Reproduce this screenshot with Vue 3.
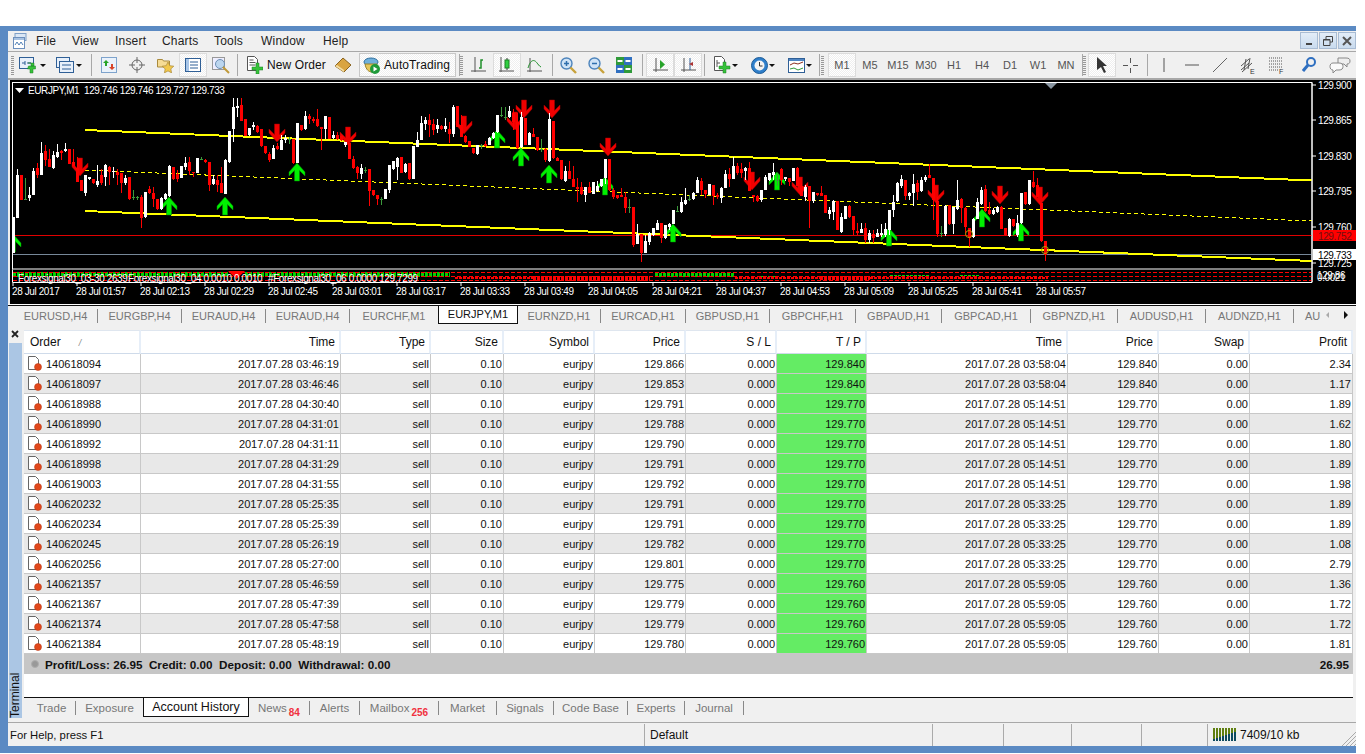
<template>
  <div class="window">
    <!-- menu -->
    <div class="menu-bar">
      <svg class="app-icon" width="15" height="17" viewBox="0 0 15 17">
        <rect x="2" y="0.5" width="11" height="7" fill="#dbe7f5" stroke="#7f9fc6" />
        <rect x="0.5" y="4.5" width="11" height="11" fill="#fff" stroke="#6d90bd" />
        <path d="M2 12l2-3 2 3 2-3 2 3" fill="none" stroke="#4f7fb5" />
        <rect x="1" y="5" width="10" height="2" fill="#a9c3e2" />
      </svg>
      <span v-for="m in menus" :key="m.name" class="menu-item" :class="m.cls">{{ m.name }}</span>
      <div class="win-buttons">
        <button class="win-btn"><span class="min-glyph"></span></button>
        <button class="win-btn">
          <svg width="10" height="10" viewBox="0 0 10 10"><path d="M3 3V.5h6.500V6H7M.5 3.500H7V9.500H.5z" fill="none" stroke="#444" /><path d="M.5 4H7" stroke="#444" /></svg>
        </button>
        <button class="win-btn">
          <svg width="10" height="10" viewBox="0 0 10 10"><path d="M1 1l8 8M9 1l-8 8" stroke="#555" stroke-width="2" /></svg>
        </button>
      </div>
    </div>

    <!-- toolbar -->
    <div class="toolbar">
      <span class="grip"></span>
      <div class="tb w37">
        <svg width="18" height="17" viewBox="0 0 18 17">
          <rect x=".5" y=".5" width="14" height="11" fill="#e8f0fa" stroke="#2f5f96" />
          <path d="M3 6h3M6 4v4M8 6h4" stroke="#2f5f96" />
          <path d="M9 6h3V9h3V6h-3zM9.500 9h7v3h-2.500v4h-3v-4h-2.500z" fill="#36c23a" stroke="#1c7f24" stroke-width=".5" />
        </svg>
        <span class="caret"></span>
      </div>
      <div class="tb w36">
        <svg width="18" height="17" viewBox="0 0 18 17">
          <rect x=".5" y=".5" width="13" height="10" fill="#e8f0fa" stroke="#2f5f96" />
          <rect x="3.500" y="4.500" width="14" height="11" fill="#e8f0fa" stroke="#2f5f96" />
          <path d="M6 8h9M6 12h9" stroke="#2f5f96" />
        </svg>
        <span class="caret"></span>
      </div>
      <span class="sep w8"></span>
      <div class="tb">
        <svg width="16" height="16" viewBox="0 0 16 16">
          <rect x=".5" y=".5" width="15" height="15" fill="#eaf2fb" stroke="#7ea3cc" />
          <path d="M5 3l3 3H6v3H4V6H2z" fill="#27a327" /><path d="M11 13l3-3h-2V7h-2v3H8z" fill="#d8452a" />
        </svg>
      </div>
      <div class="tb">
        <svg width="16" height="16" viewBox="0 0 16 16" fill="none" stroke="#666">
          <circle cx="8" cy="8" r="5" /><path d="M8 0v6M8 10v6M0 8h6M10 8h6" />
        </svg>
      </div>
      <div class="tb">
        <svg width="17" height="16" viewBox="0 0 17 16">
          <path d="M.5 2.500h5l1 1.500h6v6H.5z" fill="#f6dc95" stroke="#a98a3c" />
          <path d="M11 5l1.800 3.700 4 .5-3 2.700.8 4-3.600-2-3.600 2 .8-4-3-2.700 4-.5z" fill="#f2c84b" stroke="#a98a3c" stroke-width=".7" />
        </svg>
      </div>
      <div class="tb pressed">
        <svg width="16" height="14" viewBox="0 0 16 14">
          <rect x=".5" y=".5" width="15" height="13" fill="#fff" stroke="#2f5f96" />
          <rect x="1" y="1" width="3" height="12" fill="#a9c6e8" />
          <path d="M5 4h8M5 7h8M5 10h8" stroke="#2f5f96" />
        </svg>
      </div>
      <div class="tb">
        <svg width="18" height="18" viewBox="0 0 18 18">
          <rect x=".5" y="1.500" width="12" height="12" fill="#eef" stroke="#999" />
          <circle cx="8" cy="8" r="4.500" fill="#bcd6ef" stroke="#6d8fb5" />
          <path d="M11 11l6 6" stroke="#c09a3a" stroke-width="2" />
        </svg>
      </div>
      <span class="sep w4"></span>
      <div class="tb new-order">
        <svg width="16" height="18" viewBox="0 0 16 18">
          <path d="M.5.500h7l3 3v11H.5z" fill="#fff" stroke="#555" />
          <path d="M2.500 4h4M2.500 6.500h6M2.500 9h6" stroke="#555" />
          <path d="M9 7h3v4h4v3h-4v4H9v-4H5v-3h4z" fill="#36c23a" stroke="#1c7f24" stroke-width=".5" />
        </svg>
        <span>New Order</span>
      </div>
      <div class="tb">
        <svg width="18" height="16" viewBox="0 0 18 16">
          <path d="M1 9l8-8 8 7-7 7z" fill="#d9a441" stroke="#8a6420" />
          <path d="M1 9l9 6v-2L3 8z" fill="#f4dda0" />
        </svg>
      </div>
      <div class="auto-trading">
        <svg width="17" height="17" viewBox="0 0 17 17">
          <ellipse cx="8" cy="5" rx="7" ry="4" fill="#6fb0dc" stroke="#2f6f9e" />
          <path d="M2 7c1 6 4 8 7 8s5-3 5-8z" fill="#e6c65a" stroke="#9a8128" />
          <circle cx="12" cy="12" r="5" fill="#1f9a3a" />
          <path d="M10.500 9.500l4 2.500-4 2.500z" fill="#fff" />
        </svg>
        <span>AutoTrading</span>
      </div>
      <span class="sep w3"></span>
      <span class="grip g2"></span>
      <div class="tb">
        <svg width="16" height="16" viewBox="0 0 16 16" fill="none">
          <path d="M4 0v15M0 14h15" stroke="#555" /><path d="M8 11h2V3h2" stroke="#1f8f2a" stroke-width="1.500" />
        </svg>
      </div>
      <div class="tb pressed">
        <svg width="16" height="16" viewBox="0 0 16 16" fill="none">
          <path d="M2 0v15M0 14h15" stroke="#555" /><path d="M8 1v12" stroke="#333" /><rect x="6" y="3" width="4" height="8" fill="#30d040" stroke="#1c7f24" />
        </svg>
      </div>
      <div class="tb">
        <svg width="16" height="16" viewBox="0 0 16 16" fill="none">
          <path d="M3 1v14M0 14h15" stroke="#555" /><path d="M1 11c3-10 7-8 9-5 1 1 2 3 4 4" stroke="#1f8f2a" />
        </svg>
      </div>
      <span class="sep w5"></span>
      <div class="tb">
        <svg width="17" height="17" viewBox="0 0 17 17" fill="none">
          <circle cx="6.500" cy="6.500" r="5.500" fill="#cfe3f6" stroke="#4d84bc" stroke-width="1.400" />
          <path d="M4 6.500h5M6.500 4v5" stroke="#2f6fad" stroke-width="1.500" /><path d="M10.500 10.500l5.500 5.500" stroke="#c8a23c" stroke-width="2.400" />
        </svg>
      </div>
      <div class="tb">
        <svg width="17" height="17" viewBox="0 0 17 17" fill="none">
          <circle cx="6.500" cy="6.500" r="5.500" fill="#cfe3f6" stroke="#4d84bc" stroke-width="1.400" />
          <path d="M4 6.500h5" stroke="#2f6fad" stroke-width="1.500" /><path d="M10.500 10.500l5.500 5.500" stroke="#c8a23c" stroke-width="2.400" />
        </svg>
      </div>
      <div class="tb">
        <svg width="16" height="16" viewBox="0 0 16 16">
          <rect width="8" height="8" fill="#2f9a3a" /><rect x="8" width="8" height="8" fill="#2f6fc0" />
          <rect y="8" width="8" height="8" fill="#2f6fc0" /><rect x="8" y="8" width="8" height="8" fill="#2f9a3a" />
          <path d="M1.500 4h5M9.500 4h5M1.500 12h5M9.500 12h5" stroke="#fff" stroke-width="2" />
        </svg>
      </div>
      <span class="sep w8"></span>
      <div class="tb pressed">
        <svg width="15" height="16" viewBox="0 0 15 16" fill="none">
          <path d="M3 1v14M0 13h15" stroke="#555" /><path d="M7 3l5 4.500-5 4.500z" fill="#27a32a" />
        </svg>
      </div>
      <div class="tb pressed">
        <svg width="15" height="16" viewBox="0 0 15 16" fill="none">
          <path d="M3 1v14M0 13h15" stroke="#555" /><path d="M9 1v12" stroke="#2f5f96" /><path d="M8 7l4-2v4z" fill="#a33" />
        </svg>
      </div>
      <span class="sep w4"></span>
      <div class="tb w37 pl7">
        <svg width="17" height="18" viewBox="0 0 17 18">
          <path d="M.5.500h7l3 3v11H.5z" fill="#fff" stroke="#555" /><path d="M3 4v7M3 7h3" stroke="#555" />
          <path d="M9 6h3v4h4v3h-4v4H9v-4H5v-3h4z" fill="#36c23a" stroke="#1c7f24" stroke-width=".5" />
        </svg>
        <span class="caret"></span>
      </div>
      <div class="tb w37 pl7">
        <svg width="17" height="17" viewBox="0 0 17 17">
          <circle cx="8.500" cy="8.500" r="8" fill="#2f7fcb" stroke="#1d5b96" /><circle cx="8.500" cy="8.500" r="5" fill="#f4f4f4" />
          <path d="M8.500 5v4h3" fill="none" stroke="#333" />
        </svg>
        <span class="caret"></span>
      </div>
      <div class="tb w37 pl7">
        <svg width="17" height="15" viewBox="0 0 17 15">
          <rect x=".5" y=".5" width="16" height="14" fill="#fff" stroke="#2f5f96" /><rect x="1" y="1" width="15" height="2" fill="#4f85c3" />
          <path d="M2 7l4-2 4 1 5-2" fill="none" stroke="#8a3020" /><path d="M2 11l4-1 4 2 5-2" fill="none" stroke="#2f9a3a" />
        </svg>
        <span class="caret"></span>
      </div>
      <span class="sep w4"></span>
      <span class="grip g3"></span>
      <span v-for="p in periods" :key="p" class="tb period" :class="{ pressed: p === 'M1' }">{{ p }}</span>
      <span class="sep w3"></span>
      <span class="grip g4"></span>
      <div class="tb pressed">
        <svg width="12" height="16" viewBox="0 0 12 16"><path d="M1 0l10 9H7l3 6-2 1-3-6-4 3z" fill="#333" /></svg>
      </div>
      <div class="tb">
        <svg width="15" height="15" viewBox="0 0 15 15"><path d="M7.500 0v5M7.500 10v5M0 7.500h5M10 7.500h5" stroke="#555" fill="none" /></svg>
      </div>
      <span class="sep w6"></span>
      <div class="tb"><svg width="2" height="14"><path d="M1 0v14" stroke="#555" /></svg></div>
      <div class="tb"><svg width="14" height="2"><path d="M0 1h14" stroke="#555" /></svg></div>
      <div class="tb"><svg width="14" height="14"><path d="M0 14L14 0" stroke="#666" /></svg></div>
      <div class="tb">
        <svg width="15" height="17" viewBox="0 0 15 17" fill="none" stroke="#555">
          <path d="M0 9l8-7M0 13l8-7M1 15L11 6M3 13l2-11M7 12L9 1" /><text x="9" y="16.500" class="ico-letter">E</text>
        </svg>
      </div>
      <div class="tb">
        <svg width="15" height="17" viewBox="0 0 15 17" fill="none" stroke="#555" stroke-dasharray="1 1">
          <path d="M0 1h14M0 4h14M0 7h14M0 10h14M0 13h9" /><text x="10" y="16.500" class="ico-letter">F</text>
        </svg>
      </div>
      <span class="sep w5 blank"></span>
      <div class="tb">
        <svg width="14" height="16" viewBox="0 0 14 16" fill="none">
          <circle cx="9" cy="5" r="4" stroke="#2f6fc0" stroke-width="2" /><path d="M6 8l-5 6" stroke="#2f6fc0" stroke-width="3" />
        </svg>
      </div>
      <div class="tb chat">
        <svg width="22" height="16" viewBox="0 0 22 16">
          <path d="M9 1h8c3 0 4 1 4 3s-1 3-3 3v3l-3-3H9z" fill="#eee" stroke="#888" />
          <path d="M4 6h6c3 0 4 1.500 4 3.500S13 13 10 13H7l-3 3v-3c-2 0-3-1.500-3-3.500S2 6 4 6z" fill="#fafafa" stroke="#888" />
        </svg>
      </div>
    </div>

    <!-- chart, its data is read off the reference in 3x crop coordinates -->
    <svg class="chart" width="1348" height="225" viewBox="8 80 1348 225">
      <defs><clipPath id="plot"><rect x="13" y="83" width="1299" height="186" /></clipPath></defs>
      <rect x="8" y="80" width="1348" height="225" fill="#eee" />
      <rect x="10" y="80" width="1346" height="224" fill="#000" />
      <rect x="8" y="304" width="1348" height="1" fill="#fff" />
      <rect x="12.500" y="82.500" width="1299.500" height="186.500" fill="none" stroke="#fff" />
      <path d="M12.500 269.500V282.500H1312V269.500" fill="none" stroke="#fff" />

      <g clip-path="url(#plot)" shape-rendering="crispEdges">
        <line x1="13" y1="235.500" x2="1312" y2="235.500" stroke="#e00000" />
        <line x1="13" y1="254.500" x2="1312" y2="254.500" stroke="#778899" />
        <line x1="85" y1="130" x2="1312" y2="180.500" stroke="#ff0" stroke-width="2" />
        <line x1="85" y1="211" x2="1312" y2="261" stroke="#ff0" stroke-width="2" />
        <line x1="85" y1="170" x2="1312" y2="221" stroke="#ff0" stroke-dasharray="4 3" />
      </g>
      <g clip-path="url(#plot)">
        <polygon v-for="(a, i) in upArrows" :key="'u' + i" :points="a" fill="#00f000" stroke="#008a00" stroke-width=".5" />
        <polygon v-for="(a, i) in downArrows" :key="'d' + i" :points="a" fill="#f00000" stroke="#a00000" stroke-width=".5" />
      </g>
      <g shape-rendering="crispEdges">
        <g v-for="c in candles" :key="c.x">
          <rect :x="c.x" :y="c.wt" width="1" :height="c.wh" :fill="c.fill" />
          <rect :x="c.x - 1" :y="c.bt" width="3" :height="c.bh" :fill="c.fill" />
        </g>
      </g>
      <circle cx="969" cy="234" r="3.500" fill="none" stroke="#b5a000" />
      <circle cx="1045" cy="250" r="3.500" fill="none" stroke="#b5a000" />

      <!-- sub window -->
      <g shape-rendering="crispEdges">
        <line v-for="s in subBars" :key="s[0] + s[4]" :x1="s[0]" :y1="s[2]" :x2="s[1]" :y2="s[2]" :stroke="s[4]" :stroke-width="s[3]" stroke-dasharray="3 1" />
        <line v-for="y in [272.500, 276.500, 280.500]" :key="y" x1="13" :y1="y" x2="1312" :y2="y" stroke="#f00" stroke-dasharray="4 2" />
      </g>
      <polygon points="228,271 245,271 236.500,279" fill="#f00" />
      <text x="18" y="282" class="ct">Forexsignal30_03-30 2639</text>
      <text x="128" y="282" class="ct">Forexsignal30_04 0.0010 0.0010</text>
      <text x="268" y="282" class="ct">#Forexsignal30_06 0.0000 129.7299</text>

      <polygon points="15,88 24,88 19.500,93" fill="#fff" />
      <text x="28" y="94" class="ct">EURJPY,M1&#160;&#160;129.746 129.746 129.727 129.733</text>
      <polygon points="1045,83 1057,83 1051,89" fill="#8a96a2" />

      <!-- price axis -->
      <path d="M1312 83v199" stroke="#fff" fill="none" />
      <template v-for="p in prices" :key="p.t">
        <line x1="1312" :y1="p.y" x2="1316" :y2="p.y" stroke="#fff" />
        <text x="1318" :y="p.y + 4" class="ct">{{ p.t }}</text>
      </template>
      <rect x="1313" y="230" width="43" height="11" fill="#f00" />
      <text x="1318" y="240" class="ct dark">129.752</text>
      <rect x="1313" y="249" width="43" height="11" fill="#fff" />
      <text x="1318" y="259" class="ct black">129.733</text>
      <text x="1317" y="279" class="ct">129.86</text>
      <text x="1317" y="281" class="ct">0.0021</text>

      <!-- time axis -->
      <template v-for="t in times" :key="t.label">
        <line :x1="t.x" y1="283" :x2="t.x" y2="286" stroke="#fff" />
        <text :x="t.x - 1" y="295" class="ct">{{ t.label }}</text>
      </template>
    </svg>

    <!-- chart tabs -->
    <div class="chart-tabs">
      <span v-for="(t, i) in chartTabs" :key="i" class="ctab" :class="{ on: t === 'EURJPY,M1' }">{{ t }}</span>
      <span class="ctab clipped">AU</span>
      <span class="arrows">
        <i class="arrow-left"></i>
        <i class="arrow-right"></i>
      </span>
    </div>

    <!-- terminal -->
    <div class="terminal">
      <div class="side">
        <svg class="close-x" width="8" height="8" viewBox="0 0 8 8"><path d="M1 1l6 6M7 1L1 7" stroke="#222" stroke-width="1.800" /></svg>
        <div class="side-strip"><span>Terminal</span></div>
      </div>
      <div class="term-main">
        <table class="orders">
          <colgroup>
            <col v-for="i in 12" :key="i" :class="'c' + (i - 1)">
          </colgroup>
          <thead>
            <tr>
              <th class="left">Order<span class="sort">/</span></th>
              <th v-for="h in heads" :key="h.k">{{ h.t }}</th>
            </tr>
          </thead>
          <tbody>
            <tr v-for="r in rows" :key="r[0]">
              <td class="left">
                <span class="order-cell">
                  <svg width="15" height="15" viewBox="0 0 15 15">
                    <path d="M1.500.500h7l3 3v10h-10z" fill="#fff" stroke="#666" />
                    <circle cx="11" cy="11" r="3.500" fill="#e0481c" stroke="#b8320c" stroke-width=".5" />
                  </svg>
                  {{ r[0] }}
                </span>
              </td>
              <td>{{ r[1] }}</td>
              <td>sell</td>
              <td>0.10</td>
              <td>eurjpy</td>
              <td>{{ r[2] }}</td>
              <td>0.000</td>
              <td class="tp">{{ r[3] }}</td>
              <td>{{ r[4] }}</td>
              <td>{{ r[3] }}</td>
              <td>0.00</td>
              <td>{{ r[5] }}</td>
            </tr>
          </tbody>
        </table>
        <div class="total">
          <i class="dot"></i>
          <span class="total-text">Profit/Loss: 26.95&#160;&#160;Credit: 0.00&#160;&#160;Deposit: 0.00&#160;&#160;Withdrawal: 0.00</span>
          <span class="total-sum">26.95</span>
        </div>
        <div class="blank-area"></div>
        <div class="term-tabs">
          <span v-for="t in termTabs" :key="t.name" class="ttab" :class="{ on: t.name === 'Account History' }">{{ t.name }}<sub v-if="t.n">{{ t.n }}</sub></span>
        </div>
      </div>
    </div>

    <!-- status bar -->
    <div class="status">
      <span class="st st-help">For Help, press F1</span>
      <span class="st st-profile">Default</span>
      <span class="st st-a"></span>
      <span class="st st-b"></span>
      <span class="st st-c"></span>
      <span class="st st-d"></span>
      <span class="st st-conn">
        <svg width="23" height="13" viewBox="0 0 23 13" shape-rendering="crispEdges">
          <g v-for="i in 8" :key="i">
            <rect :x="(i - 1) * 3" y="0" width="2" height="13" fill="#5f7f10" />
            <rect :x="(i - 1) * 3" :y="12 - i" width="2" :height="i + 1" fill="#0d4a5f" />
          </g>
        </svg>
        7409/10 kb
      </span>
      <svg class="resize" width="15" height="15" viewBox="0 0 15 15"><path d="M15 1L1 15M15 5L5 15M15 9l-6 6M15 13l-2 2" stroke="#aaa" /></svg>
    </div>
  </div>
</template>

<script setup>
const menus = [
  { name: 'File', cls: 'm-file' }, { name: 'View', cls: 'm-view' }, { name: 'Insert', cls: 'm-insert' },
  { name: 'Charts', cls: 'm-charts' }, { name: 'Tools', cls: 'm-tools' }, { name: 'Window', cls: 'm-window' },
  { name: 'Help', cls: 'm-help' }
]
const periods = ['M1', 'M5', 'M15', 'M30', 'H1', 'H4', 'D1', 'W1', 'MN']

// wickTop bodyTop bodyBottom wickBottom colour, one candle every 4px, y in 3x crop units
const raw = `W 410 410 520 520,W 268 285 415 415,R 285 285 360 360,G 295 358 358 360,W 320 345 355 362,W 265 273 345 345,R 248 265 285 295,W 185 218 285 285,R 195 212 240 258,R 208 237 260 262,W 212 225 263 268,W 193 215 232 235,R 210 213 220 240,W 190 208 214 215,R 208 208 252 252,R 208 245 258 258,R 232 265 305 305,R 300 300 333 333,W 285 285 340 348,W 290 292 298 300,R 298 298 310 312,W 255 302 315 320,R 268 285 308 315,W 252 255 290 318,R 258 260 275 315,W 260 272 276 295,R 268 275 285 315,R 278 280 308 340,W 285 293 310 315,R 290 292 358 360,G 330 352 352 360,G 348 352 352 360,R 345 350 415 445,W 335 335 412 415,R 318 327 340 342,R 322 340 358 380,R 358 358 388 390,W 352 355 388 390,W 340 342 358 360,W 255 258 348 350,R 262 262 298 300,R 270 282 298 305,W 258 258 295 295,W 232 248 262 270,R 230 247 272 285,R 275 276 280 290,W 235 235 278 278,G 232 236 236 240,R 236 240 246 250,R 245 245 315 332,W 285 298 312 315,R 285 300 315 335,R 262 310 338 340,W 238 240 342 342,W 153 153 245 248,W 55 82 148 185,W 55 78 85 110,R 55 75 122 122,R 118 118 168 168,W 145 145 165 168,W 125 135 142 150,R 135 138 155 158,R 148 148 198 202,R 198 198 220 222,R 215 222 240 245,W 195 205 236 238,R 188 198 207 210,W 165 180 210 210,W 165 175 180 190,G 172 176 176 192,R 178 178 250 252,W 128 130 248 250,R 135 135 150 152,W 92 108 148 150,R 102 108 118 132,R 112 116 122 128,R 88 118 138 140,R 142 142 146 210,W 108 108 148 178,R 110 112 176 178,W 152 165 175 178,R 155 165 178 180,R 168 168 180 182,W 185 185 194 200,R 190 190 236 238,R 228 238 264 268,R 258 262 278 298,W 252 264 282 298,G 262 270 270 280,R 268 268 332 378,R 330 330 346 348,R 345 346 358 375,G 352 356 356 375,W 328 328 356 358,W 255 255 330 338,W 243 243 268 270,W 232 234 262 300,R 232 232 280 280,W 250 252 276 280,R 250 250 298 300,W 198 198 296 298,W 155 180 200 200,W 108 128 180 180,W 112 120 132 150,R 102 120 135 170,R 118 132 150 165,W 118 136 148 160,R 136 138 148 150,W 115 138 147 155,R 125 148 162 190,W 75 82 162 170,R 78 78 140 140,R 105 135 170 170,R 165 168 185 188,R 182 184 200 202,R 204 204 220 222,W 196 196 222 225,G 192 195 195 208,R 182 192 197 200,W 172 175 196 196,W 155 158 175 178,W 105 105 155 158,G 82 106 106 110,G 82 110 110 120,W 78 94 110 115,R 88 98 125 150,R 98 125 205 208,W 95 110 200 205,R 115 115 195 195,W 155 158 195 195,R 145 162 172 172,R 172 172 210 212,G 178 208 208 215,R 205 208 240 245,W 100 118 242 245,R 122 124 234 238,R 232 234 243 244,R 240 240 298 300,W 258 272 302 305,R 242 272 296 298,R 258 296 320 322,R 295 320 328 365,R 305 322 342 345,W 320 322 345 365,R 305 322 338 340,W 305 306 342 342,W 302 318 334 335,W 296 298 318 320,W 238 238 295 312,R 238 238 330 332,R 325 330 352 358,R 345 346 354 358,R 325 346 352 352,R 335 350 384 398,G 358 382 382 398,R 380 382 494 500,W 432 462 492 492,R 462 462 520 546,W 465 484 518 520,W 455 460 486 495,W 445 445 466 468,W 420 430 450 450,R 430 430 475 488,W 435 436 475 478,W 428 432 440 450,W 390 390 432 432,G 378 392 392 395,W 352 366 396 400,W 325 360 372 375,G 345 356 356 362,W 335 340 356 360,W 292 300 338 340,R 295 304 330 345,R 330 330 342 355,W 312 312 345 345,R 315 316 348 375,R 340 346 352 358,W 322 324 355 368,W 270 282 325 325,R 265 282 298 322,W 230 258 296 298,R 248 258 280 285,R 248 268 280 295,W 262 265 272 300,R 245 265 332 332,R 345 345 352 365,R 345 348 362 365,W 330 330 360 365,W 285 292 330 330,W 278 280 300 302,W 248 275 285 300,G 278 300 300 318,R 265 268 300 315,W 290 292 298 302,R 295 295 305 318,W 263 264 302 302,R 262 264 318 318,R 312 318 348 348,W 315 320 350 362,R 318 318 362 444,W 335 335 364 368,R 338 338 345 348,R 318 340 347 348,R 345 345 398 400,W 380 390 402 418,W 360 362 396 420,R 362 362 450 450,W 400 410 455 458,W 378 378 416 418,R 375 378 412 415,R 408 408 450 465,R 430 452 460 465,W 428 446 458 458,R 430 445 480 488,W 450 458 480 490,R 450 462 475 488,W 448 458 470 470,W 432 460 465 470,W 430 448 466 470,W 390 390 450 465,W 345 365 390 410,W 305 308 362 365,W 285 298 318 325,R 300 300 348 360,W 335 338 348 360,W 282 312 338 378,R 300 310 335 360,W 290 300 332 335,W 285 292 300 305,R 252 285 295 295,R 295 295 360 420,R 350 362 462 472,G 438 458 458 470,W 375 378 462 468,R 374 375 432 435,W 380 380 432 462,W 300 360 388 390,R 355 358 385 430,R 382 385 442 460,R 445 445 475 500,W 415 418 472 475,W 355 365 418 418,W 320 330 372 375,R 315 328 392 395,R 365 390 402 405,W 385 390 402 405,W 378 380 395 400,R 378 380 446 448,R 445 445 466 468,W 415 416 468 470,R 416 418 438 440,W 405 430 465 470,W 338 338 430 432,R 335 335 372 375,W 300 300 372 375,R 272 305 322 325,R 295 315 352 352,R 370 370 484 486,R 484 484 525 542`

const candles = raw.split(',').map((s, i) => {
  const [col, wt, bt, bb, wb] = s.split(' ')
  const y = v => Math.round(80 + v / 3)
  return {
    x: 13 + i * 4,
    wt: y(wt),
    wh: Math.max(1, y(wb) - y(wt)),
    bt: y(bt),
    bh: Math.max(1, y(bb) - y(bt)),
    fill: col === 'W' ? '#fff' : col === 'R' ? '#f00' : '#3c9a3c'
  }
})

const arrowShape = [[0, 0], [8, 9], [8, 13], [2.5, 7.5], [2.5, 18], [-2.5, 18], [-2.5, 7.5], [-8, 13], [-8, 9]]
const arrow = (x, y, dir) => arrowShape.map(p => `${x + p[0]},${y + dir * p[1]}`).join(' ')

const upArrows = [
  [13, 234], [169, 197], [225, 197], [297, 163], [497, 130], [521, 148], [549, 165], [605, 177],
  [673, 224], [777, 172], [889, 228], [982, 209], [1021, 223]
].map(a => arrow(a[0], a[1], 1))

const downArrows = [
  [80, 176], [277, 142], [348, 145], [464, 134], [515, 130], [524, 118], [552, 118], [608, 156],
  [752, 190], [800, 195], [936, 203], [1000, 204], [1040, 205]
].map(a => arrow(a[0], a[1], -1))

// x1, x2, y, thickness, colour of the histogram in the sub window
const subBars = [
  [13, 228, 274.500, 5, '#00d000'], [245, 450, 274.500, 5, '#00d000'], [655, 735, 274.500, 4, '#00d000'],
  [455, 533, 278, 2, '#f00'], [533, 650, 278.500, 5, '#f00'], [735, 820, 277.500, 2, '#f00'],
  [820, 870, 278, 4, '#f00'], [870, 1048, 277.500, 2, '#f00'],
  [760, 780, 276, 1, '#00d000'], [890, 930, 275, 1, '#00d000'], [960, 980, 275, 1, '#00d000']
]

const prices = [
  { t: '129.900', y: 85 }, { t: '129.865', y: 120 }, { t: '129.830', y: 156 }, { t: '129.795', y: 191 },
  { t: '129.760', y: 227 }, { t: '129.725', y: 263 }
]

const timeLabels = ['28 Jul 2017', '28 Jul 01:57', '28 Jul 02:13', '28 Jul 02:29', '28 Jul 02:45', '28 Jul 03:01',
  '28 Jul 03:17', '28 Jul 03:33', '28 Jul 03:49', '28 Jul 04:05', '28 Jul 04:21', '28 Jul 04:37', '28 Jul 04:53',
  '28 Jul 05:09', '28 Jul 05:25', '28 Jul 05:41', '28 Jul 05:57']
const times = timeLabels.map((label, i) => ({ label, x: 13 + i * 64 }))

const chartTabs = ['EURUSD,H4', 'EURGBP,H4', 'EURAUD,H4', 'EURAUD,H4', 'EURCHF,M1', 'EURJPY,M1', 'EURNZD,H1', 'EURCAD,H1',
  'GBPUSD,H1', 'GBPCHF,H1', 'GBPAUD,H1', 'GBPCAD,H1', 'GBPNZD,H1', 'AUDUSD,H1', 'AUDNZD,H1']

const heads = [
  { k: 'time', t: 'Time' }, { k: 'type', t: 'Type' }, { k: 'size', t: 'Size' }, { k: 'sym', t: 'Symbol' },
  { k: 'price', t: 'Price' }, { k: 'sl', t: 'S / L' }, { k: 'tp', t: 'T / P' }, { k: 'time2', t: 'Time' },
  { k: 'price2', t: 'Price' }, { k: 'swap', t: 'Swap' }, { k: 'profit', t: 'Profit' }
]

const rows = [
  ['140618094', '2017.07.28 03:46:19', '129.866', '129.840', '2017.07.28 03:58:04', '2.34'],
  ['140618097', '2017.07.28 03:46:46', '129.853', '129.840', '2017.07.28 03:58:04', '1.17'],
  ['140618988', '2017.07.28 04:30:40', '129.791', '129.770', '2017.07.28 05:14:51', '1.89'],
  ['140618990', '2017.07.28 04:31:01', '129.788', '129.770', '2017.07.28 05:14:51', '1.62'],
  ['140618992', '2017.07.28 04:31:11', '129.790', '129.770', '2017.07.28 05:14:51', '1.80'],
  ['140618998', '2017.07.28 04:31:29', '129.791', '129.770', '2017.07.28 05:14:51', '1.89'],
  ['140619003', '2017.07.28 04:31:55', '129.792', '129.770', '2017.07.28 05:14:51', '1.98'],
  ['140620232', '2017.07.28 05:25:35', '129.791', '129.770', '2017.07.28 05:33:25', '1.89'],
  ['140620234', '2017.07.28 05:25:39', '129.791', '129.770', '2017.07.28 05:33:25', '1.89'],
  ['140620245', '2017.07.28 05:26:19', '129.782', '129.770', '2017.07.28 05:33:25', '1.08'],
  ['140620256', '2017.07.28 05:27:00', '129.801', '129.770', '2017.07.28 05:33:25', '2.79'],
  ['140621357', '2017.07.28 05:46:59', '129.775', '129.760', '2017.07.28 05:59:05', '1.36'],
  ['140621367', '2017.07.28 05:47:39', '129.779', '129.760', '2017.07.28 05:59:05', '1.72'],
  ['140621374', '2017.07.28 05:47:58', '129.779', '129.760', '2017.07.28 05:59:05', '1.72'],
  ['140621384', '2017.07.28 05:48:19', '129.780', '129.760', '2017.07.28 05:59:05', '1.81']
]

const termTabs = [
  { name: 'Trade' }, { name: 'Exposure' }, { name: 'Account History' }, { name: 'News', n: 84 }, { name: 'Alerts' },
  { name: 'Mailbox', n: 256 }, { name: 'Market' }, { name: 'Signals' }, { name: 'Code Base' }, { name: 'Experts' },
  { name: 'Journal' }
]
</script>

<style>
html, body {
  margin: 0;
  background: #fff;
  overflow: hidden;
}
</style>

<style scoped>
.window {
  box-sizing: border-box;
  width: 1356px;
  height: 727px;
  margin-top: 26px;
  border-top: 5px solid #5b8ac3;
  border-left: 8px solid #5b8ac3;
  border-bottom: 7px solid #5b8ac3;
  background: #f0f0f0;
  font-family: "Liberation Sans", Arial, sans-serif;
  font-size: 11px;
  color: #111;
  display: flex;
  flex-direction: column;
  overflow: hidden;
}

/* menu */
.menu-bar {
  height: 20px;
  flex: none;
  border-bottom: 1px solid #a8a8a8;
  display: flex;
  align-items: center;
  font-size: 12px;
  position: relative;
}
.app-icon { margin-left: 5px; }
.menu-item { letter-spacing: 0.2px; color: #222; }
.m-file { margin-left: 8px; width: 36px; }
.m-view { width: 43px; }
.m-insert { width: 47px; }
.m-charts { width: 52px; }
.m-tools { width: 47px; }
.m-window { width: 62px; }

.win-buttons {
  position: absolute;
  right: 0;
  top: 1px;
  display: flex;
  gap: 1px;
}
.win-btn {
  width: 18px;
  height: 17px;
  padding: 0;
  border: 1px solid #a9bcd3;
  background: linear-gradient(#e3edf8, #c9dbee);
  display: flex;
  align-items: center;
  justify-content: center;
}
.min-glyph {
  width: 6px;
  height: 2px;
  background: #444;
  margin-top: 6px;
}

/* toolbar */
.toolbar {
  height: 28px;
  flex: none;
  box-sizing: border-box;
  border-bottom: 2px solid #a8a8a8;
  display: flex;
  align-items: center;
  padding-left: 3px;
}
.grip {
  width: 3px;
  height: 19px;
  flex: none;
  background: repeating-linear-gradient(#999 0 1px, transparent 1px 2px);
}
.g2 { margin-right: 2px; }
.g3 { margin-right: 4px; }
.g4 { margin-right: 2px; }
.tb {
  box-sizing: border-box;
  width: 28px;
  height: 24px;
  flex: none;
  display: flex;
  align-items: center;
  justify-content: center;
  position: relative;
}
.w37, .w36 { justify-content: flex-start; padding-left: 5px; }
.w37 { width: 37px; }
.w36 { width: 36px; }
.pl7 { padding-left: 8px; }
.caret {
  border-left: 3px solid transparent;
  border-right: 3px solid transparent;
  border-top: 3px solid #111;
  position: absolute;
  right: 5px;
  top: 11px;
}
.pressed {
  border: 1px solid #dcdcdc;
  background: repeating-conic-gradient(#fff 0 25%, #efefef 0 50%) 0 0 / 2px 2px;
}
.sep {
  flex: none;
  height: 22px;
  position: relative;
}
.sep::after {
  content: "";
  position: absolute;
  left: 50%;
  top: 0;
  bottom: 0;
  width: 1px;
  background: #a8a8a8;
}
.blank::after { display: none; }
.w3 { width: 3px; }
.w4 { width: 4px; }
.w5 { width: 5px; }
.w6 { width: 6px; }
.w8 { width: 8px; }
.new-order {
  width: 90px;
  justify-content: flex-start;
  padding-left: 8px;
  gap: 4px;
  font-size: 12px;
  letter-spacing: 0.1px;
}
.auto-trading {
  box-sizing: border-box;
  width: 97px;
  height: 24px;
  margin: 0 1px 0 2px;
  flex: none;
  border: 1px solid #c8c8c8;
  background: repeating-conic-gradient(#fff 0 25%, #f0f0f0 0 50%) 0 0 / 2px 2px;
  display: flex;
  align-items: center;
  gap: 4px;
  padding-left: 3px;
  font-size: 12px;
  letter-spacing: 0.1px;
}
.period { color: #555; font-size: 11px; }
.ico-letter {
  font-family: "Liberation Sans", Arial, sans-serif;
  font-size: 7px;
  fill: #333;
  stroke: none;
}
.chat { margin-left: 3px; }

/* chart */
.chart {
  display: block;
  flex: none;
}
.ct {
  font-family: "Liberation Sans", Arial, sans-serif;
  font-size: 10px;
  letter-spacing: -0.4px;
  fill: #fff;
}
.dark { fill: #701010; }
.black { fill: #000; }

/* chart tabs */
.chart-tabs {
  box-sizing: border-box;
  height: 20px;
  flex: none;
  border-top: 1px solid #111;
  display: grid;
  grid-template-columns: 90px 84px 84px 84px 88px 80px 83px 85px 84px 86px 86px 89px 87px 88px 88px 26px 1fr;
  position: relative;
  color: #777;
  font-size: 11px;
}
.ctab {
  height: 14px;
  margin-top: 3px;
  line-height: 14px;
  text-align: center;
  border-right: 1px solid #888;
  overflow: hidden;
}
.ctab:first-child { padding-left: 6px; }
.ctab:nth-child(5) { border-right: none; }
.ctab.on {
  box-sizing: border-box;
  height: 18px;
  margin-top: 0;
  line-height: 17px;
  background: #fff;
  color: #111;
  border: 1px solid #111;
  border-top: none;
}
.clipped {
  border-right: none;
  text-align: left;
  padding-left: 11px;
  width: 26px;
}
.arrows {
  display: flex;
  align-items: center;
  gap: 15px;
  padding-left: 6px;
  height: 17px;
}
.arrow-left {
  border-top: 3px solid transparent;
  border-bottom: 3px solid transparent;
  border-right: 3px solid #aaa;
}
.arrow-right {
  border-top: 4px solid transparent;
  border-bottom: 4px solid transparent;
  border-left: 4px solid #111;
}

/* terminal */
.terminal {
  flex: 1;
  min-height: 0;
  display: flex;
}
.side {
  width: 16px;
  flex: none;
  position: relative;
}
.close-x {
  position: absolute;
  left: 3px;
  top: 5px;
}
.side-strip {
  margin: 18px 2px 0 1px;
  height: 375px;
  background: #abc6e4;
  display: flex;
  align-items: flex-end;
}
.side-strip span {
  writing-mode: vertical-rl;
  transform: rotate(180deg);
  font-size: 12px;
  line-height: 13px;
  height: 42px;
}
.term-main {
  width: 1329px;
  flex: none;
  padding-top: 5px;
  display: flex;
  flex-direction: column;
}
.orders {
  width: 1329px;
  table-layout: fixed;
  border-collapse: separate;
  border-spacing: 0;
  background: #fff;
  flex: none;
}
.c0 { width: 117px; }
.c1 { width: 200px; }
.c2 { width: 90px; }
.c3 { width: 73px; }
.c4, .c5, .c6, .c9, .c10 { width: 91px; }
.c7 { width: 90px; }
.c8 { width: 201px; }
.c11 { width: 103px; }
.orders th {
  box-sizing: border-box;
  height: 24px;
  padding: 0 4px 0 0;
  font-weight: normal;
  font-size: 12px;
  text-align: right;
  background: #fff;
  border-right: 2px solid #e6eef8;
  border-bottom: 1px solid #cfdbea;
  border-top: 1px solid #dfe6ef;
}
.orders th.left {
  text-align: left;
  padding-left: 6px;
}
.sort {
  margin-left: 18px;
  color: #888;
  font-size: 9px;
  font-style: italic;
}
.orders td {
  box-sizing: border-box;
  height: 20px;
  padding: 0 1px 0 0;
  text-align: right;
  white-space: nowrap;
  border-right: 1px solid #c8c8c8;
  border-bottom: 1px solid #c8c8c8;
}
.orders td.left {
  text-align: left;
  padding-left: 3px;
}
.order-cell {
  display: flex;
  align-items: center;
  gap: 4px;
}
.orders tbody tr:nth-child(even) td { background: #e8e8e8; }
.orders tbody tr td.tp { background: #64ec64; }
.total {
  height: 20px;
  flex: none;
  background: #c6c6c6;
  display: flex;
  align-items: center;
  font-weight: bold;
  font-size: 11.700px;
}
.dot {
  width: 6px;
  height: 6px;
  margin-left: 7px;
  border-radius: 50%;
  background: #999;
  border: 1px solid #aeaeae;
}
.total-text { margin-left: 6px; }
.total-sum {
  margin-left: auto;
  margin-right: 4px;
}
.blank-area {
  height: 23px;
  flex: none;
  background: #fff;
}
.term-tabs {
  height: 21px;
  flex: none;
  box-sizing: border-box;
  border-top: 1px solid #111;
  display: grid;
  grid-template-columns: 52px 67px 106px 61px 50px 79px 58px 57px 74px 57px 59px;
  color: #777;
  font-size: 11.500px;
}
.ttab {
  height: 14px;
  margin-top: 3px;
  line-height: 14px;
  text-align: center;
  border-right: 1px solid #888;
  white-space: nowrap;
}
.ttab:first-child { padding-left: 4px; }
.ttab:nth-child(2) { border-right: none; }
.ttab.on {
  box-sizing: border-box;
  height: 19px;
  margin-top: 0;
  line-height: 18px;
  background: #fff;
  color: #111;
  border: 1px solid #111;
  border-top: none;
  font-size: 12.500px;
}
.ttab sub {
  color: #f03040;
  font-size: 10px;
  font-weight: bold;
  line-height: 0;
  vertical-align: -4px;
  margin-left: 2px;
}

/* status */
.status {
  height: 24px;
  flex: none;
  box-sizing: border-box;
  margin-top: 4px;
  border-top: 1px solid #a8a8a8;
  display: flex;
  align-items: center;
  position: relative;
  font-size: 12px;
}
.st {
  box-sizing: border-box;
  height: 22px;
  flex: none;
  display: flex;
  align-items: center;
  border-right: 1px solid #aaa;
}
.st-help { width: 637px; padding-left: 2px; font-size: 11.300px; }
.st-profile { width: 288px; padding-left: 5px; }
.st-a { width: 71px; }
.st-b { width: 68px; }
.st-c { width: 70px; }
.st-d { width: 66px; }
.st-conn {
  border-right: none;
  padding-left: 5px;
  gap: 4px;
}
.resize {
  position: absolute;
  right: 0;
  bottom: 0;
}
</style>
